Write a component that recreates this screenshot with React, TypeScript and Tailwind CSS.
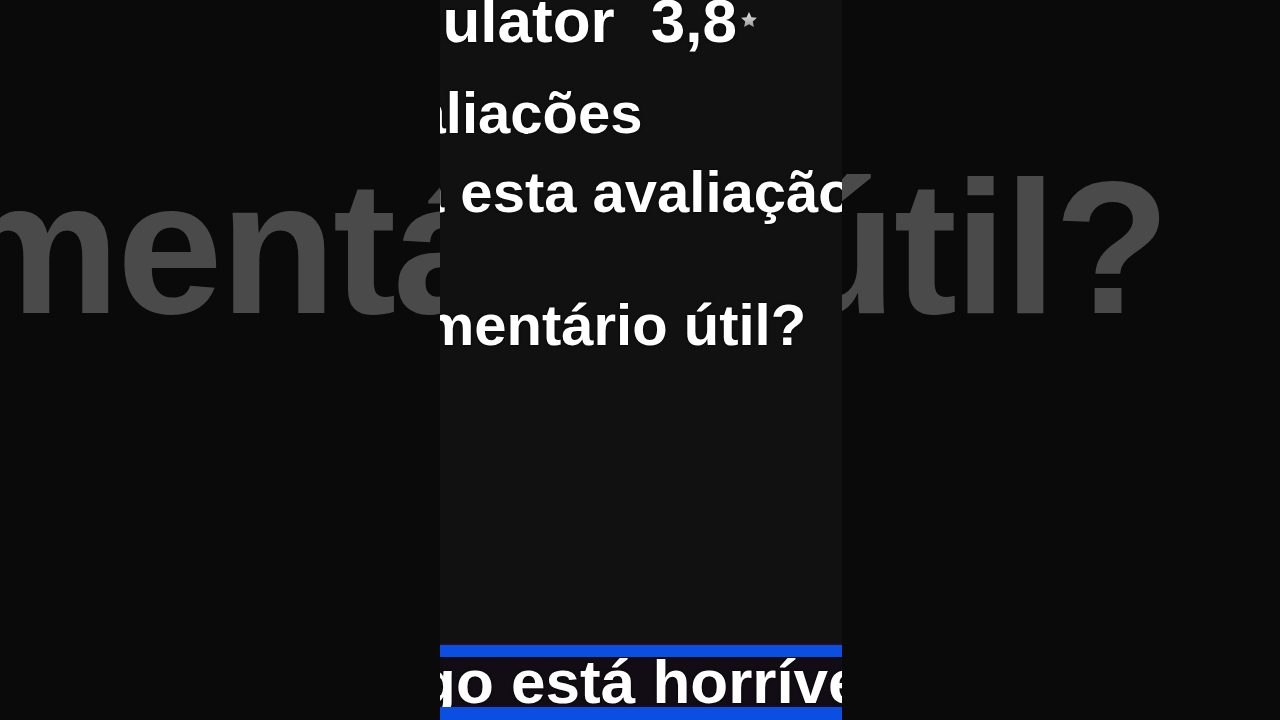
export default function App() {
  return (
    <div className="grid h-[720px] w-[1280px] overflow-hidden bg-[#0a0a0a] font-['Liberation_Sans',Arial,sans-serif] font-bold">
      {/* enlarged caption behind the phone crop */}
      <div className="col-start-1 row-start-1 pt-[152px]">
        <div className="ml-[-49px] whitespace-nowrap text-[190px] leading-none tracking-[-0.015em] text-[#4a4a4a]">
          mentário útil?
        </div>
      </div>

      {/* phone crop */}
      <div className="col-start-1 row-start-1 ml-[440px] flex h-[720px] w-[402px] flex-col overflow-hidden bg-[#111111] text-white [text-shadow:0_0_3px_#000]">
        <div className="mt-[-10px] flex shrink-0 items-start whitespace-nowrap text-[62px] leading-none">
          <span className="ml-[-94px] shrink-0">Emulator</span>
          <span className="ml-[36px] shrink-0">3,8</span>
          <svg viewBox="0 0 24 24" className="ml-[2px] mt-[20px] h-[20px] w-[20px] shrink-0">
            <defs>
              <linearGradient id="star" x1="0" y1="0" x2="0" y2="1">
                <stop offset="0" stopColor="#e6e6e6" />
                <stop offset="1" stopColor="#9a9a9a" />
              </linearGradient>
            </defs>
            <path
              d="M12 2.5l2.9 6.2 6.6.7-5 4.5 1.4 6.6L12 17.2l-5.9 3.3 1.4-6.6-5-4.5 6.6-.7z"
              fill="url(#star)"
            />
          </svg>
        </div>

        {/* line is clipped just under the baseline */}
        <div className="mt-[32px] h-[50px] shrink-0 overflow-hidden whitespace-nowrap text-[58px] leading-none">
          <div className="ml-[-91px]">avaliações</div>
        </div>

        <div className="mt-[29px] shrink-0 whitespace-nowrap text-[58px] leading-none">
          <div className="ml-[-28px]">a esta avaliação</div>
        </div>

        <div className="mt-[75px] shrink-0 whitespace-nowrap text-[58px] leading-none">
          <div className="ml-[-85px]">comentário útil?</div>
        </div>

        {/* caption strip */}
        <div className="mt-auto flex shrink-0 flex-col">
          <div className="h-[14px] border-t-2 border-[#2a0d1c] bg-[#0b4fe2]" />
          <div className="h-[50px] overflow-hidden whitespace-nowrap bg-[#120d14] text-[62px] leading-[50px]">
            <div className="ml-[-77px]">jogo está horrível</div>
          </div>
          <div className="h-[13px] bg-[#0b4fe2]" />
        </div>
      </div>
    </div>
  );
}
